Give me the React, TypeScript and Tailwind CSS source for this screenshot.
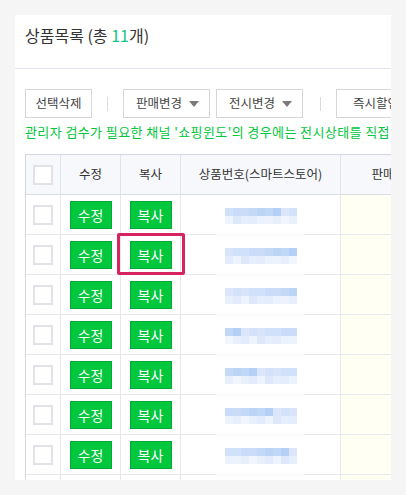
import React from "react";

const topPal = ["#cfe0f9", "#bcd5f7", "#d3e1f9", "#c9dbf8", "#c1d7f7", "#d7e4fa", "#cadcf8", "#b5d0f6", "#d0e1f9", "#c4d8f7", "#dbe6fa"];
const botPal = ["#eef4fd", "#e3edfc", "#e7effc", "#e2ecfc", "#e5eefc", "#edf3fd", "#e8f0fc", "#dde9fb", "#eaf2fd", "#f1f6fe"];

function BlurNum({ seed }: { seed: number }) {
  const top = Array.from({ length: 9 }, (_, i) => topPal[(i * 3 + seed * 5) % topPal.length]);
  const bot = Array.from({ length: 9 }, (_, i) => botPal[(i * 7 + seed * 3) % botPal.length]);
  return (
    <div className="flex flex-col">
      <div className="flex">
        {top.map((c, i) => (
          <div key={i} className="w-[8px] h-[8px]" style={{ backgroundColor: c }} />
        ))}
      </div>
      <div className="flex">
        {bot.map((c, i) => (
          <div key={i} className="w-[8px] h-[8px]" style={{ backgroundColor: c }} />
        ))}
      </div>
    </div>
  );
}

function Caret() {
  return (
    <svg width="10" height="6" viewBox="0 0 10 6">
      <path d="M0 0H10L5 6Z" fill="#7a7a7a" />
    </svg>
  );
}

function GreenBtn({ label }: { label: string }) {
  return (
    <div className="w-[42px] h-[28px] bg-[#00c73c] border border-[#06a838] text-white text-[14px] flex items-center justify-center leading-none">
      {label}
    </div>
  );
}

export default function App() {
  const rows = Array.from({ length: 8 }, (_, i) => i);
  return (
    <div className="w-[406px] h-[495px] bg-[#f5f5f5] pt-[15px] pl-[15px] font-['Noto_Sans_CJK_KR','Noto_Sans',sans-serif]">
      <div className="w-[376px] h-[465px] bg-white overflow-hidden">
        <div className="h-[54px] border-b border-[#e2e5eb] pl-[10px] pt-[8px] text-[16px] leading-[24px] text-[#333] whitespace-nowrap">
          상품목록 (총 <span className="text-[#12c28a]">11</span>개)
        </div>
        <div className="pl-[10px] pt-[20px]">
          <div className="flex items-center whitespace-nowrap text-[12.5px] text-[#444]">
            <div className="w-[67px] h-[29px] shrink-0 border border-[#d6d6d6] flex items-center justify-center">선택삭제</div>
            <div className="ml-[15px] mr-[15px] w-px h-[14px] bg-[#dcdcdc] shrink-0" />
            <div className="w-[87px] h-[29px] shrink-0 border border-[#d6d6d6] flex items-center justify-between pl-[12px] pr-[10px]">
              <span>판매변경</span>
              <Caret />
            </div>
            <div className="ml-[6px] w-[87px] h-[29px] shrink-0 border border-[#d6d6d6] flex items-center justify-between pl-[12px] pr-[10px]">
              <span>전시변경</span>
              <Caret />
            </div>
            <div className="ml-[17px] mr-[15px] w-px h-[14px] bg-[#dcdcdc] shrink-0" />
            <div className="w-[80px] h-[29px] shrink-0 border border-[#d6d6d6] flex items-center justify-center">즉시할인</div>
          </div>
          <div className="mt-[5px] text-[13px] tracking-[0.4px] leading-[18px] text-[#00c73c] whitespace-nowrap">
            관리자 검수가 필요한 채널 '쇼핑윈도'의 경우에는 전시상태를 직접 변경해야 합니다.
          </div>
          <div className="mt-[13px] w-[424px] border-l border-t border-[#d3d6de] text-[12.5px] text-[#333]">
            <div className="flex h-[40px] border-b border-[#d9dce4] bg-[#f7f8fc]">
              <div className="w-[35px] shrink-0 border-r border-[#e1e3ea] flex items-center justify-center">
                <div className="w-[20px] h-[20px] border-2 border-[#e0e2e7] bg-white" />
              </div>
              <div className="w-[60px] shrink-0 border-r border-[#e1e3ea] flex items-center justify-center">수정</div>
              <div className="w-[60px] shrink-0 border-r border-[#e1e3ea] flex items-center justify-center">복사</div>
              <div className="w-[160px] shrink-0 border-r border-[#e1e3ea] flex items-center justify-center whitespace-nowrap">상품번호(스마트스토어)</div>
              <div className="w-[108px] shrink-0 border-r border-[#e1e3ea] flex items-center justify-center">판매상태</div>
            </div>
            {rows.map((i) => (
              <div key={i} className="flex h-[40px] border-b border-[#e6e8ee]">
                <div className="w-[35px] shrink-0 border-r border-[#e6e8ee] flex items-center justify-center">
                  <div className="w-[20px] h-[20px] border-2 border-[#e0e2e7] bg-white" />
                </div>
                <div className="w-[60px] shrink-0 border-r border-[#e6e8ee] flex items-center justify-center">
                  <GreenBtn label="수정" />
                </div>
                <div className="relative w-[60px] shrink-0 border-r border-[#e6e8ee] flex items-center justify-center">
                  <GreenBtn label="복사" />
                  {i === 1 && (
                    <div className="absolute left-[-4px] top-[-2px] w-[68px] h-[42px] border-[3px] border-[#d7245e] rounded-[2px]" />
                  )}
                </div>
                <div className="relative w-[160px] shrink-0 border-r border-[#e6e8ee] flex justify-center pt-[13px]">
                  <BlurNum seed={i} />
                  <div className="absolute left-[35px] bottom-[-3px] w-[88px] h-[4px] bg-[#fcfcfc]" />
                </div>
                <div className="w-[108px] shrink-0 bg-[#fffff4]" />
              </div>
            ))}
          </div>
        </div>
      </div>
    </div>
  );
}
